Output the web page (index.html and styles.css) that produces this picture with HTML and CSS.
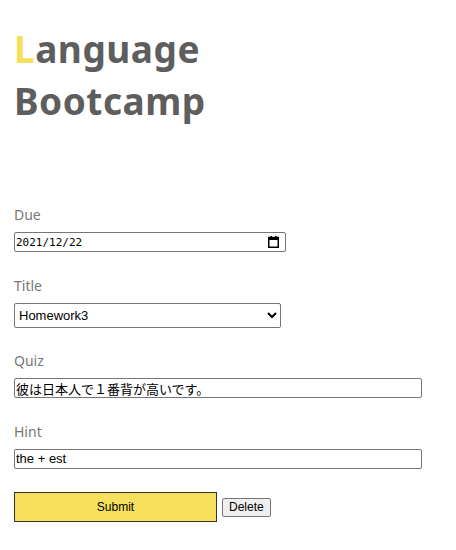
FILE: index.html
```html
<!DOCTYPE html>
<html>
<head>
<meta charset="utf-8">
<link rel="stylesheet" href="styles.css">
</head>
<body>
<header class="brand">
  <h1 class="brand-title"><span class="brand-initial">L</span>anguage<br>Bootcamp</h1>
</header>
<form class="quiz-form">
  <div class="field">
    <label class="field-label" for="due">Due</label>
    <div class="date-box">
      <input class="date-text" id="due" type="text" value="2021/12/22">
      <svg class="date-icon" width="11" height="12" viewBox="0 0 11 12" aria-hidden="true">
        <rect x="0.75" y="1.5" width="9.5" height="9.75" fill="none" stroke="#000" stroke-width="1.5"/>
        <rect x="0" y="1" width="11" height="3" fill="#000"/>
        <rect x="2.5" y="0" width="1.5" height="2" fill="#000"/>
        <rect x="7" y="0" width="1.5" height="2" fill="#000"/>
      </svg>
    </div>
  </div>
  <div class="field">
    <label class="field-label" for="title">Title</label>
    <select class="input input-select" id="title">
      <option>Homework3</option>
    </select>
  </div>
  <div class="field">
    <label class="field-label" for="quiz">Quiz</label>
    <input class="input input-wide" id="quiz" type="text" value="彼は日本人で１番背が高いです。">
  </div>
  <div class="field">
    <label class="field-label" for="hint">Hint</label>
    <input class="input input-wide" id="hint" type="text" value="the + est">
  </div>
  <div class="actions">
    <button class="btn-submit" type="button">Submit</button>
    <button class="btn-delete" type="button">Delete</button>
  </div>
</form>
</body>
</html>
```
FILE: styles.css
```css
html, body {
  margin: 0;
  padding: 0;
  background: #ffffff;
}
body {
  padding: 0 14px;
  font-family: "Noto Sans", "Noto Sans CJK JP", sans-serif;
}
.brand {
  padding-top: 23px;
  height: 180px;
  box-sizing: border-box;
}
.brand-title {
  margin: 0;
  font-family: "Noto Sans", sans-serif;
  font-weight: 700;
  font-size: 37px;
  line-height: 52px;
  color: #5e5e5e;
  letter-spacing: 0.5px;
}
.brand-initial {
  color: #f7df5c;
}
.quiz-form {
  display: flex;
  flex-direction: column;
  margin-top: 25px;
}
.field {
  display: flex;
  flex-direction: column;
  align-items: flex-start;
  margin-bottom: 23.5px;
}
.field-label {
  font-size: 14px;
  color: #777777;
  line-height: 20px;
  margin-bottom: 7px;
}
.input {
  box-sizing: border-box;
  margin: 0;
  font-size: 13px;
  color: #000;
  border: 1px solid #767676;
  border-radius: 2px;
  background: #fff;
  font-family: "Liberation Sans", "Noto Sans CJK JP", sans-serif;
}
.date-box {
  box-sizing: border-box;
  width: 272px;
  height: 20px;
  display: flex;
  align-items: center;
  border: 1px solid #767676;
  border-radius: 2px;
  background: #fff;
  padding: 0 6px 0 1px;
}
.date-text {
  flex: 1;
  min-width: 0;
  border: 0;
  outline: none;
  padding: 0;
  margin: 0;
  background: transparent;
  font-family: "DejaVu Sans Mono", monospace;
  font-size: 11px;
  color: #000;
}
.date-icon {
  display: block;
  flex: none;
}
.input-select {
  width: 267px;
  height: 25px;
  padding: 0;
}
.input-wide {
  width: 408px;
  height: 20px;
  padding: 0 1px;
}
.actions {
  display: flex;
  align-items: center;
  gap: 5px;
  margin-top: 0;
}
.btn-submit {
  width: 203px;
  height: 30px;
  background: #f7e05b;
  border: 1px solid #333;
  border-radius: 0;
  font-family: "Liberation Sans", sans-serif;
  font-size: 12px;
  color: #000;
}
.btn-delete {
  height: 19px;
  padding: 0 6px;
  font-family: "Liberation Sans", sans-serif;
  font-size: 12px;
  background: #efefef;
  border: 1px solid #767676;
  border-radius: 2px;
  color: #000;
}
```
